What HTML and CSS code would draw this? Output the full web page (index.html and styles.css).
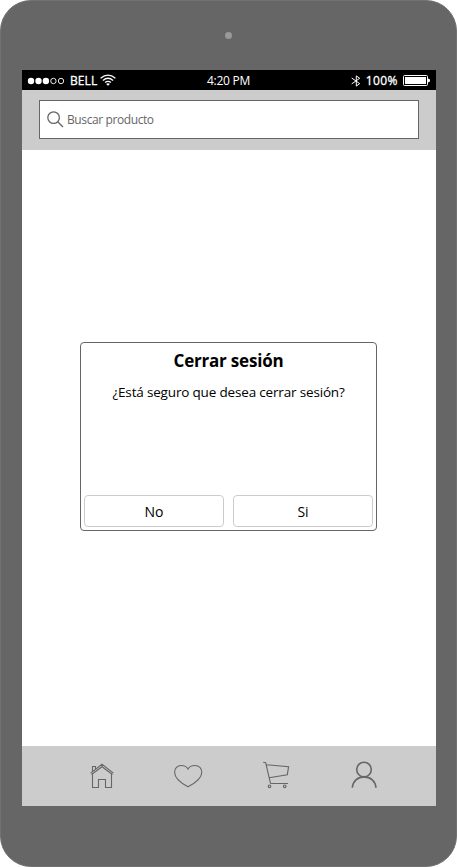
FILE: index.html
```html
<!DOCTYPE html>
<html lang="es">
<head>
<meta charset="utf-8">
<title>Cerrar sesión</title>
<link rel="stylesheet" href="styles.css">
</head>
<body>
<div class="device">
  <div class="bezel"><span class="camera"></span></div>
  <div class="screen">
    <header class="status">
      <div class="status-left">
        <svg class="signal" width="38" height="8" viewBox="0 0 38 8"><g fill="#fff"><circle cx="4" cy="4" r="3.2"/><circle cx="11.5" cy="4" r="3.2"/><circle cx="18.9" cy="4" r="3.2"/></g><g fill="none" stroke="#fff" stroke-width=".9"><circle cx="26.4" cy="4" r="2.7"/><circle cx="34" cy="4" r="2.7"/></g></svg>
        <span class="carrier">BELL</span>
        <svg class="wifi" width="16" height="12" viewBox="0 0 16 12"><g fill="none" stroke="#fff" stroke-width="1.3"><path d="M.6 4.3Q8-2.1 15.4 4.3M2.9 6.5Q8 2.1 13.1 6.5M5.1 8.6Q8 6.2 10.9 8.6"/></g><path d="M6.1 9.9Q8 8.6 9.9 9.9L8 11.7z" fill="#fff"/></svg>
      </div>
      <span class="clock">4:20 PM</span>
      <div class="status-right">
        <svg class="bluetooth" width="10" height="12" viewBox="0 0 10 12"><path d="M.7 3l8 5.6-3.4 2.5V.9l3.4 2.4-8 5.6" fill="none" stroke="#fff" stroke-width="1"/></svg>
        <span class="percent">100%</span>
        <svg class="battery" width="27" height="11" viewBox="0 0 27 11"><rect x=".5" y=".5" width="24" height="10" rx="1" fill="none" stroke="#fff"/><path d="M2 2h21v7H2zM25 3.5l2 1v2l-2 1z" fill="#fff"/></svg>
      </div>
    </header>
    <div class="search-bar">
      <div class="search">
        <svg width="17" height="17" viewBox="0 0 17 17" fill="none" stroke="#666" stroke-width="1.3"><circle cx="6.6" cy="6.6" r="5.8"/><path d="M10.7 10.7l5.3 5.3"/></svg>
        <span>Buscar producto</span>
      </div>
    </div>
    <main class="content">
      <section class="dialog">
        <h1>Cerrar sesión</h1>
        <p>¿Está seguro que desea cerrar sesión?</p>
        <div class="actions">
          <button>No</button>
          <button>Si</button>
        </div>
      </section>
    </main>
    <nav class="tabs">
      <svg class="tab home" viewBox="0 0 32 32"><path d="M6.5 13v14.5h6v-8h7v8h6V13M6.5 11.5v-5h3v2.8M4.6 13.1L16 4.3l11.4 8.8M5.5 14.5L16 6.7l10.5 7.8"/></svg>
      <svg class="tab heart" viewBox="0 0 32 32"><path d="M16 9C14.6 6.2 12.2 5.5 9.3 5.5 5.3 5.5 2.6 8.4 2.6 12.2c0 6.3 7.2 11.3 13.4 14.5 6.2-3.2 13.8-8.2 13.8-14.5 0-3.8-2.8-6.7-6.8-6.7-2.9 0-5.6.7-7 3.5z"/></svg>
      <svg class="tab" viewBox="0 0 32 32"><path d="M3.2 2.2l2.5.6 4.5 19.3q.2 1.4 1 1.4H28M6.5 4.7l22.1 2-1.3 8L9.1 17.7"/><circle cx="9.5" cy="26.3" r="1.3"/><circle cx="24.7" cy="26.3" r="1.3"/></svg>
      <svg class="tab user" viewBox="0 0 32 32"><circle cx="16" cy="9.6" r="7.3"/><path d="M4.3 27.8C4.8 21.3 9.6 16.9 16.1 16.9S27.5 21.3 28 27.8"/></svg>
    </nav>
  </div>
</div>
</body>
</html>
```
FILE: styles.css
```css
* { box-sizing: border-box; }
body { margin: 0; background: #fff; font-family: "Open Sans", "Noto Sans", sans-serif; color: #000; }
svg { display: block; flex: none; }
.device { width: 457px; height: 867px; padding: 0 20px 0 21px; background: #666; border: 1px solid #727272; border-radius: 31px; }
.bezel { height: 69px; display: flex; justify-content: center; padding: 31px 1px 0 0; }
.camera { width: 7px; height: 7px; border-radius: 50%; background: #999; }
.screen { width: 414px; height: 736px; display: flex; flex-direction: column; background: #fff; }
.status { height: 20px; display: grid; grid-template-columns: 1fr auto 1fr; align-items: center; padding: 0 6px 0 5px; background: #000; color: #fff; font-size: 12px; line-height: 20px; white-space: nowrap; }
.status-left, .status-right { display: flex; align-items: center; }
.status-right { justify-content: flex-end; }
.carrier { margin: 0 3px 0 5px; letter-spacing: .1px; -webkit-text-stroke: .3px #fff; }
.wifi { margin-top: -2px; }
.clock { letter-spacing: -.25px; padding-top: 1px; }
.bluetooth { margin: 1px 5px 0 0; }
.percent { margin-right: 5px; padding-top: 1px; letter-spacing: .45px; -webkit-text-stroke: .3px #fff; }
.battery { margin-top: 0; }
.search-bar { height: 60px; padding: 10px 17px 11px; background: #ccc; }
.search { height: 39px; display: flex; align-items: center; gap: 3px; padding-left: 7px; background: #fff; border: 1px solid #666; color: #666; font-size: 12px; letter-spacing: -.4px; }
.content { flex: 1; display: flex; flex-direction: column; align-items: center; padding: 192px 1px 0 0; }
.dialog { width: 297px; height: 189px; display: flex; flex-direction: column; margin-right: 1px; padding: 5px 3px 3px; border: 1px solid #666; border-radius: 4px; background: #fff; text-align: center; white-space: nowrap; }
.dialog h1 { margin: 0; padding-left: 1px; font-size: 17px; line-height: 26px; font-weight: 700; letter-spacing: -.2px; }
.dialog p { margin: 7px 0 0; padding-left: 1px; font-size: 13.5px; line-height: 22px; letter-spacing: -.17px; }
.actions { margin-top: auto; display: flex; gap: 9px; }
.actions button { flex: 1; height: 32px; padding: 1px 0 0 1px; border: 1px solid #ccc; border-radius: 4px; background: #fff; color: #000; font: 14px "Open Sans", "Noto Sans", sans-serif; }
.tabs { height: 60px; display: flex; gap: 56px; padding: 14px 0 0 64px; background: #ccc; }
.tab { width: 32px; height: 32px; fill: none; stroke: #666; stroke-width: 1.1; }
.heart { margin-left: -2px; }
.user { stroke-width: 1.6; }
```
